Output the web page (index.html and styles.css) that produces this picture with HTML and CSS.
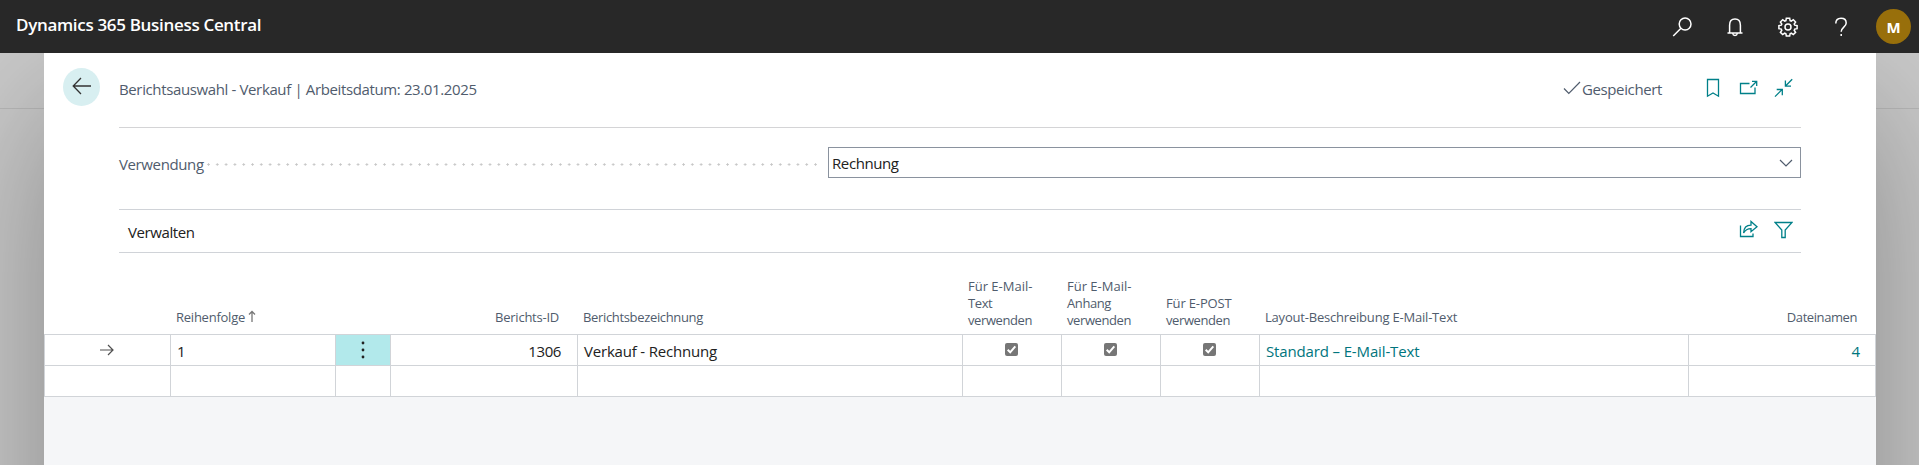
FILE: index.html
```
<!DOCTYPE html>
<html lang="de">
<head>
<meta charset="utf-8">
<title>Dynamics 365 Business Central</title>
<link rel="stylesheet" href="styles.css">
</head>
<body>
<header class="topbar">
  <span class="brand">Dynamics 365 Business Central</span>
  <nav class="tools">
    <svg class="tool" width="20" height="20" viewBox="0 0 20 20"><circle cx="13.1" cy="7" r="5.9"/><path d="M9 11.3 1.2 19"/></svg>
    <svg class="tool" width="20" height="20" viewBox="0 0 20 20"><path d="M2.500 16h15M4.600 16V8.200C4.600 4.300 6.700 2 10 2s5.400 2.300 5.400 6.200V16M7.700 16.500c.2 1.300 1.100 2 2.300 2s2.100-.7 2.300-2"/></svg>
    <svg class="tool" width="20" height="20" viewBox="0 0 20 20"><circle cx="10" cy="10" r="3"/><path d="M8.300 1.200h3.400l.4 2.400 1.200.5 2-1.400 2.300 2.300-1.400 2 .5 1.200 2.400.4v3.100l-2.400.4-.5 1.200 1.400 2-2.300 2.300-2-1.400-1.200.5-.4 2.300H8.300l-.4-2.300-1.200-.5-2 1.400-2.300-2.300 1.400-2-.5-1.200-2.400-.4V8.600l2.400-.4.500-1.200-1.400-2 2.300-2.300 2 1.400 1.200-.5z"/></svg>
    <svg class="tool" width="20" height="20" viewBox="0 0 20 20"><path d="M4.800 6.500c0-3.200 2.100-5.300 5.200-5.300s5.200 1.900 5.200 4.700c0 4.100-5 4.300-5 8.800M10.200 17.100v2"/></svg>
    <span class="avatar">M</span>
  </nav>
</header>
<div class="stage">
  <main class="dialog">
    <div class="head">
      <button class="back" aria-label="Zurück"><svg width="20" height="18" viewBox="0 0 20 18"><path d="M19 9H1.200M9 1 1.200 9 9 17"/></svg></button>
      <div class="headline">
        <h1 class="title">Berichtsauswahl - Verkauf | Arbeitsdatum: 23.01.2025</h1>
        <div class="saved"><svg width="18" height="14" viewBox="0 0 18 14"><path d="M1 7.500 5.800 12.500 17 1"/></svg><span>Gespeichert</span></div>
        <div class="actions">
          <svg width="19" height="20" viewBox="0 0 19 20"><path d="M3.500 1.500h11v16.700L9 15l-5.500 3.200z"/></svg>
          <svg width="19" height="20" viewBox="0 0 19 20"><path d="M10.500 5.500h-9v10h14.500V9.500M11.500 9.500 17.500 3.500M13 3.300h4.700V8"/></svg>
          <svg width="19" height="20" viewBox="0 0 19 20"><path d="M18.200 1.200 11.500 8M11.400 2.500V8.200H17M1 18.600 8 11.600M2.700 11.500h5.600v5.700"/></svg>
        </div>
      </div>
    </div>
    <div class="field">
      <label class="label">Verwendung</label>
      <span class="leader"></span>
      <div class="select"><span>Rechnung</span><svg width="14" height="8" viewBox="0 0 14 8"><path d="M1 1l6 6 6-6"/></svg></div>
    </div>
    <div class="bar">
      <span class="manage">Verwalten</span>
      <div class="actions">
        <svg width="19" height="20" viewBox="0 0 19 20"><path d="M1.500 6.500v11h12.500v-3M4.600 14C4.800 8.600 7.800 6.200 12 6.200V2.500l6 5.200-6 5V9.600C8.500 9.600 6.200 11 4.600 14z"/></svg>
        <svg width="19" height="20" viewBox="0 0 19 20"><path d="M1 3.500h17L11.200 11v7.500H7.800V11z"/></svg>
      </div>
    </div>
    <div class="grid">
      <div class="th"></div>
      <div class="th">Reihenfolge<svg class="sort" width="8" height="12" viewBox="0 0 8 12"><path d="M4 12V1.500M1 4.500l3-3 3 3"/></svg></div>
      <div class="th"></div>
      <div class="th right id">Berichts-ID</div>
      <div class="th name">Berichtsbezeichnung</div>
      <div class="th multi"><span class="wide">Für E-Mail-</span><span>Text</span><span>verwenden</span></div>
      <div class="th multi"><span class="wide">Für E-Mail-</span><span>Anhang</span><span>verwenden</span></div>
      <div class="th multi"><span class="post">Für E-POST</span><span>verwenden</span></div>
      <div class="th layout">Layout-Beschreibung E-Mail-Text</div>
      <div class="th right files">Dateinamen</div>

      <div class="td mid"><svg class="arrow" width="14" height="12" viewBox="0 0 14 12"><path d="M0 6h13M8 1l5 5-5 5"/></svg></div>
      <div class="td">1</div>
      <div class="td mid menu"><svg width="4" height="18" viewBox="0 0 4 18"><circle cx="2" cy="2" r="1.400"/><circle cx="2" cy="9" r="1.400"/><circle cx="2" cy="16" r="1.400"/></svg></div>
      <div class="td right num">1306</div>
      <div class="td report">Verkauf - Rechnung</div>
      <div class="td mid"><svg class="check" width="13" height="13" viewBox="0 0 13 13"><rect width="13" height="13" rx="2"/><path d="M2.700 6.800 5.200 9.300 10.300 3.300"/></svg></div>
      <div class="td mid"><svg class="check" width="13" height="13" viewBox="0 0 13 13"><rect width="13" height="13" rx="2"/><path d="M2.700 6.800 5.200 9.300 10.300 3.300"/></svg></div>
      <div class="td mid"><svg class="check" width="13" height="13" viewBox="0 0 13 13"><rect width="13" height="13" rx="2"/><path d="M2.700 6.800 5.200 9.300 10.300 3.300"/></svg></div>
      <div class="td link">Standard – E-Mail-Text</div>
      <div class="td right link last">4</div>

      <div class="td"></div><div class="td"></div><div class="td"></div><div class="td"></div><div class="td"></div><div class="td"></div><div class="td"></div><div class="td"></div><div class="td"></div><div class="td last"></div>
    </div>
    <div class="rest"></div>
  </main>
</div>
</body>
</html>
```
FILE: styles.css
```
* { box-sizing: border-box; }
body {
  margin: 0;
  height: 465px;
  overflow: hidden;
  background: #cbcbcb;
  color: #212121;
  font: 15px/20px "Open Sans", "Noto Sans", sans-serif;
}
svg { display: block; flex: none; fill: none; stroke: currentColor; stroke-width: 1.3; }

.topbar {
  position: relative;
  z-index: 1;
  height: 53px;
  padding: 0 8px 0 16px;
  display: flex;
  justify-content: space-between;
  align-items: center;
  background: #282828;
  color: #fff;
}
.brand { padding-bottom: 4px; font-size: 17px; font-weight: 600; letter-spacing: -0.32px; }
.tools { display: flex; align-items: center; gap: 33px; }
.tool { stroke-width: 1.5; }
.avatar {
  width: 35px;
  height: 35px;
  margin-left: -8px;
  border-radius: 50%;
  background: #986f0b;
  font-size: 15px;
  font-weight: 700;
  line-height: 36px;
  text-align: center;
}

.stage {
  height: 700px;
  padding: 0 43px 0 44px;
  background: linear-gradient(#b9b9b9, #b9b9b9) 0 55px / 100% 1px no-repeat;
}
.dialog {
  height: 700px;
  display: flex;
  flex-direction: column;
  background: #fff;
  box-shadow: 0 50px 148px rgba(0, 0, 0, 0.34);
}

.head { display: flex; gap: 19px; padding: 0 75px 0 19px; }
.back {
  width: 37px;
  height: 38px;
  margin-top: 15px;
  padding: 0 0 2px;
  border: 0;
  border-radius: 50%;
  display: flex;
  align-items: center;
  justify-content: center;
  background: #d8eff1;
  color: #333;
}
.headline {
  flex: 1;
  height: 75px;
  padding-bottom: 2px;
  border-bottom: 1px solid #d4d4d6;
  display: flex;
  align-items: center;
  color: #505c6d;
}
.title { margin: 0; flex: 1; font-size: 15px; font-weight: 400; letter-spacing: -0.37px; }
.saved { display: flex; align-items: center; gap: 1px; margin-right: 42px; letter-spacing: -0.37px; }
.saved svg { stroke-width: 1.2; margin-bottom: 3px; }
.actions { display: flex; gap: 16px; padding: 0 8px 2px 0; color: #008089; }

.field { display: flex; align-items: center; height: 31px; margin: 19px 75px 0; }
.label { padding-top: 3px; color: #505c6d; letter-spacing: -0.38px; }
.leader {
  flex: 1;
  height: 3px;
  margin: 3px 11px 0 3px;
  background: radial-gradient(circle at 1.500px 1.500px, #c6c6c6 0.900px, transparent 1.400px) 0 0 / 8.800px 3px;
}
.select {
  width: 973px;
  height: 31px;
  padding: 1px 7px 0 3px;
  border: 1px solid #8a929e;
  display: flex;
  align-items: center;
  justify-content: space-between;
  letter-spacing: -0.4px;
}
.select svg { color: #505c6d; stroke-width: 1.200; }
.bar {
  height: 44px;
  margin: 31px 75px 0;
  padding-left: 9px;
  border: solid #d0d3d8;
  border-width: 1px 0;
  display: flex;
  align-items: center;
  justify-content: space-between;
}
.manage { padding-top: 2px; letter-spacing: -0.4px; }
.bar .actions { padding-bottom: 4px; }

.grid {
  display: grid;
  grid-template-columns: 126px 165px 55px 187px 385px 99px 99px 99px 429px 188px;
  grid-template-rows: 81px 31px 32px;
}
.th {
  padding: 0 6px 8px;
  display: flex;
  align-items: flex-end;
  color: #505c6d;
  font-size: 13px;
  line-height: 17px;
  letter-spacing: -0.24px;
}
.sort { margin: 0 0 4px 3px; color: #777; }
.multi { flex-direction: column; align-items: flex-start; justify-content: flex-end; padding-bottom: 5px; }
.multi span { letter-spacing: -0.4px; }
.multi .wide { letter-spacing: 0; }
.multi .post { letter-spacing: -0.15px; }
.th.name { letter-spacing: -0.34px; }
.th.layout { letter-spacing: -0.2px; }
.th.files { padding-right: 19px; letter-spacing: -0.42px; }
.th.id { padding-right: 18px; }
.td {
  padding: 2px 6px 0;
  border: 0 solid #d1d4d8;
  border-width: 1px 0 0 1px;
  display: flex;
  align-items: center;
  letter-spacing: -0.14px;
}
.td:nth-child(n + 21) { border-bottom-width: 1px; }
.td.last { border-right-width: 1px; }
.right { justify-content: flex-end; }
.td.mid { justify-content: center; padding: 0 8px 0 6px; }
.td.menu { padding: 0 6px; }
.td.num { padding-right: 16px; letter-spacing: -0.4px; }
.td.report { letter-spacing: -0.19px; }
.link { color: #00757d; }
.link.last { padding-right: 15px; }
.menu { background: #b2e9eb; }
.menu svg { fill: #222; stroke: none; }
.arrow { color: #505050; stroke-width: 1.200; }
.check { margin-bottom: 1px; }
.check rect { fill: #767676; stroke: none; }
.check path { stroke: #fff; stroke-width: 2; }
.rest { flex: 1; background: #f5f6f8; }
```
